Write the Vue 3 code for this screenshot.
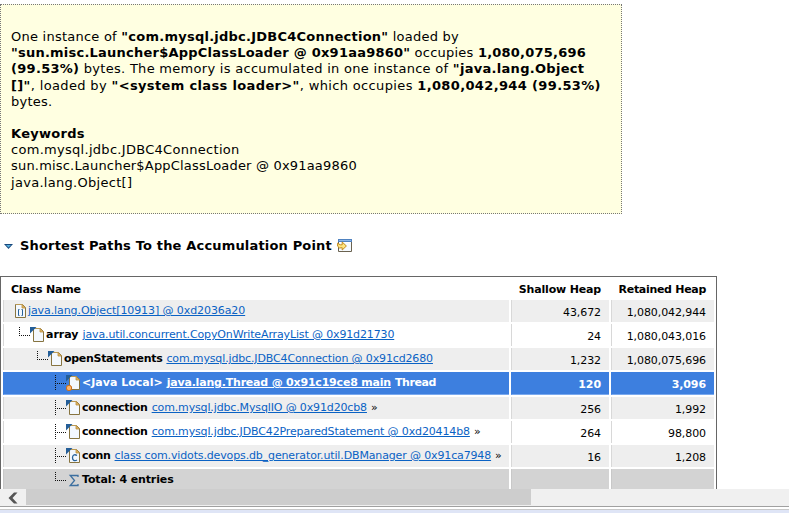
<script setup>
const rows = [
  { kind: 'array', level: 0, link: 'java.lang.Object[10913] @ 0xd2036a20', shallow: '43,672', retained: '1,080,042,944' },
  { kind: 'page', level: 1, name: 'array', link: 'java.util.concurrent.CopyOnWriteArrayList @ 0x91d21730', shallow: '24', retained: '1,080,043,016' },
  { kind: 'page', level: 2, name: 'openStatements', link: 'com.mysql.jdbc.JDBC4Connection @ 0x91cd2680', shallow: '1,232', retained: '1,080,075,696' },
  { kind: 'local', level: 3, tee: true, selected: true, name: '<Java Local>', link: 'java.lang.Thread @ 0x91c19ce8 main', tail: 'Thread', shallow: '120', retained: '3,096' },
  { kind: 'page', level: 3, tee: true, name: 'connection', link: 'com.mysql.jdbc.MysqlIO @ 0x91d20cb8', tail: '»', shallow: '256', retained: '1,992' },
  { kind: 'page', level: 3, tee: true, name: 'connection', link: 'com.mysql.jdbc.JDBC42PreparedStatement @ 0xd20414b8', tail: '»', shallow: '264', retained: '98,800' },
  { kind: 'class', level: 3, tee: true, name: 'conn', link: 'class com.vidots.devops.db_generator.util.DBManager @ 0x91ca7948', tail: '»', shallow: '16', retained: '1,208' },
  { kind: 'sum', level: 3, total: true, name: 'Total: 4 entries', shallow: '', retained: '' },
]
</script>

<template>
  <div class="view">
    <main class="report">
      <section class="suspect">
        <p><span class="l1">One instance of <b>"com.mysql.jdbc.JDBC4Connection"</b> loaded by</span><br>
          <span class="l2"><b>"sun.misc.Launcher$AppClassLoader @ 0x91aa9860"</b> occupies <b>1,080,075,696</b></span><br>
          <span class="l3"><b>(99.53%)</b> bytes. The memory is accumulated in one instance of <b>"java.lang.Object</b></span><br>
          <span class="l4"><b>[]"</b>, loaded by <b>"&lt;system class loader&gt;"</b>, which occupies <b>1,080,042,944 (99.53%)</b></span><br>
          <span class="l1">bytes.</span></p>
        <p class="keywords"><b>Keywords</b><br>com.mysql.jdbc.JDBC4Connection<br><span class="k2">sun.misc.Launcher$AppClassLoader @ 0x91aa9860</span><br>java.lang.Object[]</p>
      </section>

      <h2 class="heading">
        <svg class="twisty" width="9" height="5" viewBox="0 0 9 5"><path d="M0 0h9L4.5 5z" fill="#17477c" /><path d="M2 1h5L4.5 3.5z" fill="#5bb0dc" /></svg>
        <span>Shortest Paths To the Accumulation Point</span>
        <svg class="open" width="16" height="13" viewBox="0 0 16 13">
          <path d="M1.5 1v11.5h13V1" fill="#fff" stroke="#6b6250" />
          <path d="M1 0h14v3H1z" fill="#4f82c0" /><path d="M2 1h12v1H2z" fill="#8db8e8" />
          <path d="M2 4h12v8H2z" fill="#f5faff" />
          <path d="M.6 4.2l2.6 1.6h2V3l4.2 4-4.2 4V8.700L2.500 9 .6 7.200z" fill="#ffe680" stroke="#c28a1c" />
        </svg>
      </h2>

      <div class="table">
        <div class="row head">
          <div class="cell">Class Name</div>
          <div class="cell num">Shallow Heap</div>
          <div class="cell num last">Retained Heap</div>
        </div>
        <div v-for="(r, i) in rows" :key="i" class="row" :class="{ odd: i % 2 === 0, selected: r.selected, total: r.total }">
          <div class="cell tree" :class="'level' + r.level">
            <svg v-if="r.level" class="elbow" width="18" height="18" viewBox="0 0 18 18">
              <path :d="r.tee ? 'M7.500 1v16' : 'M7.500 1v9'" stroke="#111" stroke-dasharray="1 1" />
              <path d="M9 9.500h9" stroke="#111" stroke-dasharray="1 1" />
            </svg>
            <svg class="icon" width="16" height="18" viewBox="0 0 16 18">
              <path v-if="r.kind === 'sum'" d="M12 6V4.500H4.200L8.500 9.500 4.200 14.500h7.800V13" fill="none" stroke="#3c6f9f" stroke-width="1.300" />
              <template v-else>
                <path d="M3.500 2.500h7l3 3v10h-10z" fill="#f3f8fe" stroke="#877440" />
                <path d="M10 2.500v3.500h3.500z" fill="#e8ba62" stroke="#b58a3c" stroke-width=".8" />
                <path d="M4 2.500h6.500" stroke="#bc9a52" />
                <path v-if="r.kind !== 'array'" d="M0 1h6.500L0 7.500z" fill="#245e98" />
                <path v-if="r.kind === 'array'" d="M7.500 7.500h-1v6h1M9.500 7.500h1v6h-1" fill="none" stroke="#28629b" />
                <path v-if="r.kind === 'class'" d="M11 8.500C8.500 6.800 6.500 8.200 6.500 10.700s2 3.900 4.500 2.300" fill="none" stroke="#28629b" stroke-width="1.300" />
                <circle v-if="r.kind === 'local'" cx="3" cy="14" r="2.700" fill="#ffb469" stroke="#c96e1c" />
              </template>
            </svg>
            <span class="label" :class="'label' + i"><b v-if="r.name">{{ r.name }}</b><a v-if="r.link">{{ r.link }}</a><i v-if="r.tail">{{ r.tail }}</i></span>
          </div>
          <div class="cell num">{{ r.shallow }}</div>
          <div class="cell num">{{ r.retained }}</div>
        </div>
      </div>
    </main>

    <div class="scrollbar">
      <div class="arrow"><svg width="10" height="12" viewBox="0 0 10 12"><path d="M6 .5h3.500L4.500 6l5 5.500H6L.5 6z" fill="#555" /></svg></div>
      <div class="thumb"></div>
    </div>
    <footer class="edge"></footer>
  </div>
</template>

<style>
body { margin: 0; overflow: hidden; background: #fff; }
</style>

<style scoped>
.view { width: 789px; height: 513px; display: flex; flex-direction: column; overflow: hidden; font-family: Verdana, "DejaVu Sans", sans-serif; color: #000; }
.report { height: 489px; flex: none; overflow: hidden; padding-top: 4px; box-sizing: border-box; }
.suspect { box-sizing: border-box; width: 622px; height: 210px; padding: 24px 10px 0; border: 1px dotted #777; background: #ffffe1; font-size: 13px; line-height: 16.2px; white-space: nowrap; }
p { margin: 0; }
.l1 { letter-spacing: .24px; }
.l2 { letter-spacing: .225px; }
.l3 { letter-spacing: .29px; }
.l4 { letter-spacing: .355px; }
.keywords { margin-top: 16px; letter-spacing: .29px; }
.k2 { letter-spacing: .19px; }
.heading { margin: 0; height: 62px; box-sizing: border-box; display: flex; align-items: center; padding: 1px 0 0 4px; font-size: 13px; line-height: 16px; letter-spacing: .17px; white-space: nowrap; }
.twisty { margin: 2px 7px 0 0; }
.open { margin-left: 5px; }
.table { box-sizing: border-box; width: 717px; height: 240px; border: solid #666; border-width: 1px 1px 0; padding: 1px 2px 0; display: flex; flex-direction: column; gap: 2px; font-size: 11px; }
.row { display: grid; grid-template-columns: 506px 98px 103px; gap: 2px; height: 22px; flex: none; }
.head { height: 20px; font-weight: bold; letter-spacing: -.2px; }
.cell { box-sizing: border-box; border-left: 1px solid #d8d8d8; white-space: nowrap; min-width: 0; }
.num { text-align: right; padding-right: 8px; padding-top: 3px; line-height: 19px; letter-spacing: -.09px; }
.head .cell { border-color: transparent; padding-left: 7px; padding-top: 3px; line-height: 17px; }
.head .num { padding-left: 0; letter-spacing: -.17px; }
.head .last { letter-spacing: -.3px; }
.odd .cell { background: #eee; }
.selected { height: 23px; }
.selected .cell { background: #3d7fdf; border-color: #3d7fdf; border-bottom: 1px solid #7aa9ee; color: #fff; font-weight: bold; }
.total .cell { background: #d3d3d3; border-color: #c8c8c8; }
.tree { display: flex; align-items: flex-start; padding: 2px 0 0 8px; }
.level2 { padding-left: 26px; }
.level3 { padding-left: 44px; }
.elbow, .icon { flex: none; }
.label { display: flex; line-height: 16px; padding-top: 1px; }
.label a { text-decoration: underline; color: #0a62c4; margin-left: 4px; letter-spacing: -.14px; }
.label0 a { margin-left: 0; letter-spacing: -.09px; }
.label2 b { letter-spacing: -.3px; }
.label3 a { letter-spacing: -.2px; }
.label4 b, .label5 b { letter-spacing: -.25px; }
.label6 b { letter-spacing: -.3px; }
.label7 b { letter-spacing: -.12px; }
.label i { font-style: normal; margin-left: 4px; letter-spacing: -.4px; }
.selected a { color: #fff; }
.scrollbar { height: 17px; flex: none; background: #f0f0f0; display: flex; }
.arrow { width: 26px; display: flex; align-items: center; justify-content: center; }
.thumb { width: 505px; height: 16px; background: #cdcdcd; }
.edge { height: 7px; box-sizing: border-box; border-top: 1px solid #a0a0a0; background: linear-gradient(#fff 0 2px, #c8c8c8 2px 3px, #dfe5f6 3px); }
</style>
